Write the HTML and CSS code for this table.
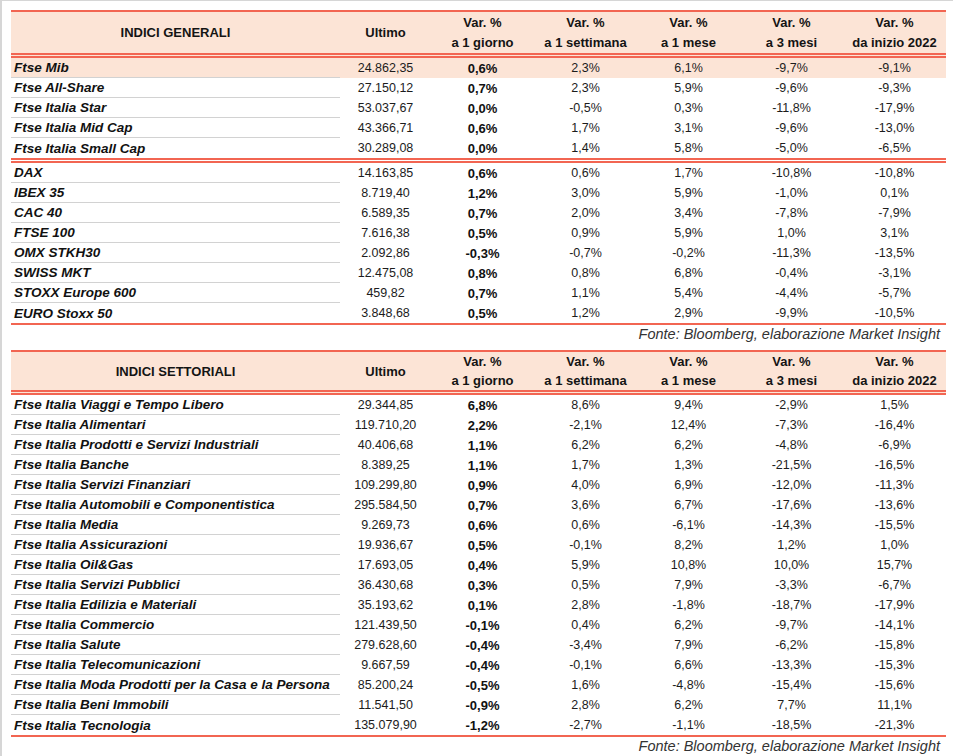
FILE: index.html
```html
<!DOCTYPE html>
<html lang="it">
<head>
<meta charset="utf-8">
<title>Indici</title>
<link rel="stylesheet" href="styles.css">
</head>
<body>
<div class="sheet">
  <table class="tbl">
    <colgroup><col class="c-name"><col class="c-last"><col class="c-var"><col class="c-var"><col class="c-var"><col class="c-var"><col class="c-var"></colgroup>
    <thead>
      <tr class="hrow"><th>INDICI GENERALI</th><th>Ultimo</th><th>Var. %<br>a 1 giorno</th><th>Var. %<br>a 1 settimana</th><th>Var. %<br>a 1 mese</th><th>Var. %<br>a 3 mesi</th><th>Var. %<br>da inizio 2022</th></tr>
    </thead>
    <tbody class="grp">
      <tr class="hl"><td class="nm">Ftse Mib</td><td>24.862,35</td><td class="b">0,6%</td><td>2,3%</td><td>6,1%</td><td>-9,7%</td><td>-9,1%</td></tr>
      <tr><td class="nm">Ftse All-Share</td><td>27.150,12</td><td class="b">0,7%</td><td>2,3%</td><td>5,9%</td><td>-9,6%</td><td>-9,3%</td></tr>
      <tr><td class="nm">Ftse Italia Star</td><td>53.037,67</td><td class="b">0,0%</td><td>-0,5%</td><td>0,3%</td><td>-11,8%</td><td>-17,9%</td></tr>
      <tr><td class="nm">Ftse Italia Mid Cap</td><td>43.366,71</td><td class="b">0,6%</td><td>1,7%</td><td>3,1%</td><td>-9,6%</td><td>-13,0%</td></tr>
      <tr><td class="nm">Ftse Italia Small Cap</td><td>30.289,08</td><td class="b">0,0%</td><td>1,4%</td><td>5,8%</td><td>-5,0%</td><td>-6,5%</td></tr>
    </tbody>
    <tbody class="grp grp-next">
      <tr><td class="nm">DAX</td><td>14.163,85</td><td class="b">0,6%</td><td>0,6%</td><td>1,7%</td><td>-10,8%</td><td>-10,8%</td></tr>
      <tr><td class="nm">IBEX 35</td><td>8.719,40</td><td class="b">1,2%</td><td>3,0%</td><td>5,9%</td><td>-1,0%</td><td>0,1%</td></tr>
      <tr><td class="nm">CAC 40</td><td>6.589,35</td><td class="b">0,7%</td><td>2,0%</td><td>3,4%</td><td>-7,8%</td><td>-7,9%</td></tr>
      <tr><td class="nm">FTSE 100</td><td>7.616,38</td><td class="b">0,5%</td><td>0,9%</td><td>5,9%</td><td>1,0%</td><td>3,1%</td></tr>
      <tr><td class="nm">OMX STKH30</td><td>2.092,86</td><td class="b">-0,3%</td><td>-0,7%</td><td>-0,2%</td><td>-11,3%</td><td>-13,5%</td></tr>
      <tr><td class="nm">SWISS MKT</td><td>12.475,08</td><td class="b">0,8%</td><td>0,8%</td><td>6,8%</td><td>-0,4%</td><td>-3,1%</td></tr>
      <tr><td class="nm">STOXX Europe 600</td><td>459,82</td><td class="b">0,7%</td><td>1,1%</td><td>5,4%</td><td>-4,4%</td><td>-5,7%</td></tr>
      <tr class="last"><td class="nm">EURO Stoxx 50</td><td>3.848,68</td><td class="b">0,5%</td><td>1,2%</td><td>2,9%</td><td>-9,9%</td><td>-10,5%</td></tr>
    </tbody>
  </table>
  <p class="src">Fonte: Bloomberg, elaborazione Market Insight</p>

  <table class="tbl">
    <colgroup><col class="c-name"><col class="c-last"><col class="c-var"><col class="c-var"><col class="c-var"><col class="c-var"><col class="c-var"></colgroup>
    <thead>
      <tr class="hrow hrow-s"><th>INDICI SETTORIALI</th><th>Ultimo</th><th>Var. %<br>a 1 giorno</th><th>Var. %<br>a 1 settimana</th><th>Var. %<br>a 1 mese</th><th>Var. %<br>a 3 mesi</th><th>Var. %<br>da inizio 2022</th></tr>
    </thead>
    <tbody class="grp">
      <tr><td class="nm">Ftse Italia Viaggi e Tempo Libero</td><td>29.344,85</td><td class="b">6,8%</td><td>8,6%</td><td>9,4%</td><td>-2,9%</td><td>1,5%</td></tr>
      <tr><td class="nm">Ftse Italia Alimentari</td><td>119.710,20</td><td class="b">2,2%</td><td>-2,1%</td><td>12,4%</td><td>-7,3%</td><td>-16,4%</td></tr>
      <tr><td class="nm">Ftse Italia Prodotti e Servizi Industriali</td><td>40.406,68</td><td class="b">1,1%</td><td>6,2%</td><td>6,2%</td><td>-4,8%</td><td>-6,9%</td></tr>
      <tr><td class="nm">Ftse Italia Banche</td><td>8.389,25</td><td class="b">1,1%</td><td>1,7%</td><td>1,3%</td><td>-21,5%</td><td>-16,5%</td></tr>
      <tr><td class="nm">Ftse Italia Servizi Finanziari</td><td>109.299,80</td><td class="b">0,9%</td><td>4,0%</td><td>6,9%</td><td>-12,0%</td><td>-11,3%</td></tr>
      <tr><td class="nm">Ftse Italia Automobili e Componentistica</td><td>295.584,50</td><td class="b">0,7%</td><td>3,6%</td><td>6,7%</td><td>-17,6%</td><td>-13,6%</td></tr>
      <tr><td class="nm">Ftse Italia Media</td><td>9.269,73</td><td class="b">0,6%</td><td>0,6%</td><td>-6,1%</td><td>-14,3%</td><td>-15,5%</td></tr>
      <tr><td class="nm">Ftse Italia Assicurazioni</td><td>19.936,67</td><td class="b">0,5%</td><td>-0,1%</td><td>8,2%</td><td>1,2%</td><td>1,0%</td></tr>
      <tr><td class="nm">Ftse Italia Oil&amp;Gas</td><td>17.693,05</td><td class="b">0,4%</td><td>5,9%</td><td>10,8%</td><td>10,0%</td><td>15,7%</td></tr>
      <tr><td class="nm">Ftse Italia Servizi Pubblici</td><td>36.430,68</td><td class="b">0,3%</td><td>0,5%</td><td>7,9%</td><td>-3,3%</td><td>-6,7%</td></tr>
      <tr><td class="nm">Ftse Italia Edilizia e Materiali</td><td>35.193,62</td><td class="b">0,1%</td><td>2,8%</td><td>-1,8%</td><td>-18,7%</td><td>-17,9%</td></tr>
      <tr><td class="nm">Ftse Italia Commercio</td><td>121.439,50</td><td class="b">-0,1%</td><td>0,4%</td><td>6,2%</td><td>-9,7%</td><td>-14,1%</td></tr>
      <tr><td class="nm">Ftse Italia Salute</td><td>279.628,60</td><td class="b">-0,4%</td><td>-3,4%</td><td>7,9%</td><td>-6,2%</td><td>-15,8%</td></tr>
      <tr><td class="nm">Ftse Italia Telecomunicazioni</td><td>9.667,59</td><td class="b">-0,4%</td><td>-0,1%</td><td>6,6%</td><td>-13,3%</td><td>-15,3%</td></tr>
      <tr><td class="nm">Ftse Italia Moda Prodotti per la Casa e la Persona</td><td>85.200,24</td><td class="b">-0,5%</td><td>1,6%</td><td>-4,8%</td><td>-15,4%</td><td>-15,6%</td></tr>
      <tr><td class="nm">Ftse Italia Beni Immobili</td><td>11.541,50</td><td class="b">-0,9%</td><td>2,8%</td><td>6,2%</td><td>7,7%</td><td>11,1%</td></tr>
      <tr class="last"><td class="nm">Ftse Italia Tecnologia</td><td>135.079,90</td><td class="b">-1,2%</td><td>-2,7%</td><td>-1,1%</td><td>-18,5%</td><td>-21,3%</td></tr>
    </tbody>
  </table>
  <p class="src">Fonte: Bloomberg, elaborazione Market Insight</p>
</div>
</body>
</html>
```

FILE: styles.css
```css
html, body {
  margin: 0;
  padding: 0;
  background: #ffffff;
}

body {
  font-family: "Liberation Sans", Arial, sans-serif;
  color: #141414;
}

.sheet {
  box-sizing: border-box;
  height: 756px;
  border-top: 1px solid #d6d6d6;
  border-left: 2px solid #d6d6d6;
  padding: 9px 7px 0 9px;
}

.tbl {
  width: 935px;
  table-layout: fixed;
  border-collapse: separate;
  border-spacing: 0;
}

.c-name { width: 329px; }
.c-last { width: 91px; }
.c-var { width: 103px; }

.tbl th {
  background: #fce4d6;
  border-top: 2px solid #f26552;
  border-bottom: 5px double #f26552;
  padding: 0;
  font-size: 13px;
  line-height: 20px;
  font-weight: bold;
  text-align: center;
  vertical-align: middle;
  color: #141414;
}

.hrow { height: 48px; }
.hrow-s { height: 45px; }
.hrow-s th { line-height: 19px; }

.tbl td {
  padding: 0;
  height: 20px;
  box-sizing: border-box;
  font-size: 12.5px;
  line-height: 19px;
  text-align: center;
  vertical-align: middle;
  white-space: nowrap;
  color: #1c1c1c;
}

.tbl td.nm {
  text-align: left;
  padding-left: 3px;
  font-size: 13.5px;
  font-weight: bold;
  font-style: italic;
  color: #111111;
  border-bottom: 1px solid #d2d2d2;
}

.tbl td.b {
  font-weight: bold;
  font-size: 13px;
  color: #111111;
}

.tbl tr:last-child td.nm {
  border-bottom: 0;
}

.tbl tr.hl td {
  background: #fce4d6;
}

.grp-next tr:first-child td {
  border-top: 5px double #f26552;
  height: 25px;
}

.tbl tr.last td,
.tbl tr.last td.nm {
  border-bottom: 2px solid #f26552;
  height: 22px;
}

.src {
  margin: 0;
  height: 25px;
  padding-right: 6px;
  padding-top: 0;
  text-align: right;
  font-size: 14.5px;
  line-height: 18px;
  font-style: italic;
  color: #333333;
  width: 935px;
  box-sizing: border-box;
}
```
